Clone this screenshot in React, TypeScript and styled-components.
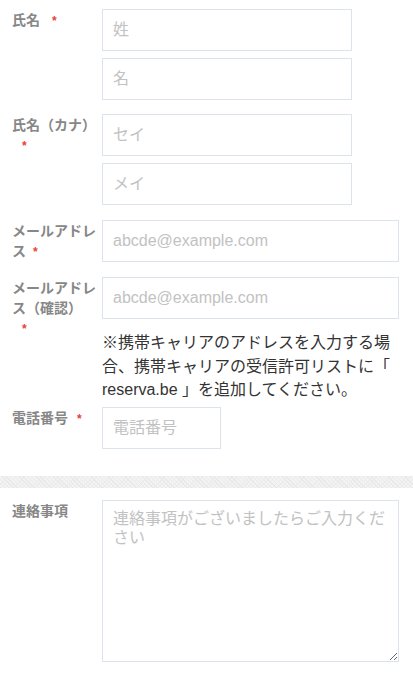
import * as React from "react";
import styled, { createGlobalStyle } from "styled-components";

const GlobalStyle = createGlobalStyle`
    html, body {
        margin: 0;
        padding: 0;
        background: #fff;
    }
    body {
        font-family: "Liberation Sans", "Noto Sans CJK JP", sans-serif;
        color: #333;
    }
    * {
        box-sizing: border-box;
    }
`

const Form = styled.form`
    display: flex;
    flex-direction: column;
    padding: 9px 0 0;
`

const Row = styled.div<{ $top?: number }>`
    display: flex;
    gap: 6px;
    padding: 0 14px 0 12px;
    margin-top: ${p => p.$top ?? 0}px;
`

const Label = styled.label`
    flex: 0 0 84px;
    width: 84px;
    font-family: "Noto Sans CJK JP", sans-serif;
    font-size: 14px;
    font-weight: 700;
    line-height: 20px;
    color: #878787;
`

const Required = styled.span<{ $gap?: number }>`
    display: inline-block;
    margin-left: ${p => p.$gap ?? 10}px;
    font-family: "Liberation Sans", sans-serif;
    font-size: 12px;
    color: #e8413c;
`

const Fields = styled.div`
    flex: 1;
    display: flex;
    flex-direction: column;
    gap: 7px;
    min-width: 0;
`

const Input = styled.input<{ $width?: number }>`
    display: block;
    width: ${p => (p.$width ? `${p.$width}px` : "100%")};
    height: 42px;
    padding: 0 10px;
    border: 1px solid #dce3ea;
    border-radius: 0;
    background: #fff;
    font-family: "Liberation Sans", "Noto Sans CJK JP", sans-serif;
    font-size: 16px;
    color: #333;
    outline: none;

    &::placeholder {
        color: #c2c2c2;
    }
`

const Note = styled.p`
    margin: 5px 0 0;
    font-family: "Liberation Sans", "Noto Sans CJK JP", sans-serif;
    font-size: 16px;
    line-height: 23.5px;
    color: #333;
`

const Divider = styled.div`
    height: 12px;
    margin-top: 27px;
    background-color: #f4f4f4;
    background-image: repeating-linear-gradient(45deg, #e9e9e9 0 1px, transparent 1px 3px),
        repeating-linear-gradient(-45deg, #ededed 0 1px, transparent 1px 3px);
`

const TextArea = styled.textarea`
    display: block;
    width: 100%;
    height: 162px;
    padding: 8px 10px;
    border: 1px solid #dce3ea;
    border-radius: 0;
    font-family: "Liberation Sans", "Noto Sans CJK JP", sans-serif;
    font-size: 16px;
    line-height: 19px;
    color: #333;
    outline: none;
    resize: both;

    &::placeholder {
        color: #c2c2c2;
    }
`

const App = () => {
    return (
        <>
            <GlobalStyle />
            <Form>
                <Row>
                    <Label>氏名<Required $gap={12}>*</Required></Label>
                    <Fields>
                        <Input $width={250} placeholder="姓" />
                        <Input $width={250} placeholder="名" />
                    </Fields>
                </Row>
                <Row $top={14}>
                    <Label>氏名（カナ）<Required>*</Required></Label>
                    <Fields>
                        <Input $width={250} placeholder="セイ" />
                        <Input $width={250} placeholder="メイ" />
                    </Fields>
                </Row>
                <Row $top={15}>
                    <Label>メールアドレス<Required $gap={7}>*</Required></Label>
                    <Fields>
                        <Input type="email" placeholder="abcde@example.com" />
                    </Fields>
                </Row>
                <Row $top={15}>
                    <Label>メールアドレス（確認）<Required>*</Required></Label>
                    <Fields>
                        <Input type="email" placeholder="abcde@example.com" />
                        <Note>
                            ※携帯キャリアのアドレスを入力する場合、携帯キャリアの受信許可リストに「 reserva.be 」を追加してください。
                        </Note>
                    </Fields>
                </Row>
                <Row $top={5}>
                    <Label>電話番号<Required $gap={9}>*</Required></Label>
                    <Fields>
                        <Input $width={119} type="tel" placeholder="電話番号" />
                    </Fields>
                </Row>
                <Divider />
                <Row $top={12}>
                    <Label>連絡事項</Label>
                    <Fields>
                        <TextArea placeholder="連絡事項がございましたらご入力ください" />
                    </Fields>
                </Row>
            </Form>
        </>
    );
};

export default App;
